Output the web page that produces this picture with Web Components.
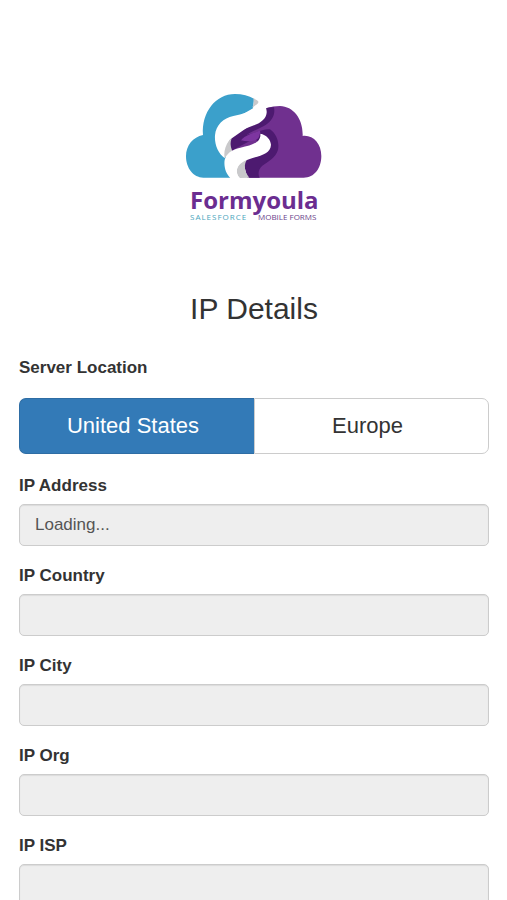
<!DOCTYPE html>
<html lang="en">
<head>
<meta charset="utf-8">
<meta name="viewport" content="width=device-width, initial-scale=1">
<title>IP Details</title>
<style>
  body {
    margin: 0;
    background: #fff;
    color: #333;
    font-family: "Liberation Sans", Arial, sans-serif;
    font-size: 17px;
    line-height: 24px;
  }
</style>
</head>
<body>
<ip-page>
  <brand-logo slot="logo"></brand-logo>
  <span slot="title">IP Details</span>
  <server-switch>
    <span slot="label">Server Location</span>
    <span slot="first">United States</span>
    <span slot="second">Europe</span>
  </server-switch>
  <info-field label="IP Address" value="Loading..."></info-field>
  <info-field label="IP Country"></info-field>
  <info-field label="IP City"></info-field>
  <info-field label="IP Org"></info-field>
  <info-field label="IP ISP"></info-field>
</ip-page>

<template id="page-template">
  <style>
    :host { display: block; padding: 85px 18px 24px 19px; }
    header { display: flex; flex-direction: column; align-items: center; gap: 61px; }
    h1 { margin: 0; font-size: 30px; line-height: 36px; font-weight: 500; }
    main { display: flex; flex-direction: column; gap: 18px; margin-top: 29px; }
  </style>
  <header>
    <slot name="logo"></slot>
    <h1><slot name="title"></slot></h1>
  </header>
  <main><slot></slot></main>
</template>

<template id="logo-template">
  <style>
    :host { display: block; width: 150px; }
    svg { display: block; width: 100%; }
    text { font-family: "Open Sans", "Noto Sans", sans-serif; }
    .name { font-size: 24px; font-weight: 700; fill: #6b2d90; }
    .tag { font-size: 8px; }
    .sales { fill: #4aa5bd; letter-spacing: 1px; }
    .forms { fill: #6b3f8c; }
  </style>
  <svg viewBox="-1 0 150 145" role="img" aria-label="Formyoula Salesforce Mobile Forms">
    <g transform="scale(.33333)">
      <path fill="#3ba0cb" d="M70 278C40 278 18 249 18 214C18 181 39 156 69 150C64 82 107 27 165 27C187 27 207 33 222 41L219 70L150 110L120 150L125 200L145 225L151 278Z"/>
      <path fill="#c9c9cb" d="M219 39C227 43 234 47 238 53L216 68C222 58 223 48 219 39Z"/>
      <path fill="#70308f" d="M260 69C274 65 286 63 300 63C341 64 370 103 368 153C399 149 424 176 424 213C424 250 403 278 371 278H205L195 230L150 198L155 163L258 103Z"/>
      <path fill="#4d1a70" d="M258 70C267 67 275 66 282 67C286 88 278 105 258 119C235 134 212 138 194 155L153 200L148 165L220 115Z"/>
      <path fill="#4d1a70" d="M153 198L152 172C172 158 200 148 225 143C244 136 258 131 270 133C288 145 299 170 294 194C288 218 263 230 247 242C235 253 233 267 239 278H202L190 232L240 180L225 160Z"/>
      <path fill="#7d35a0" d="M183 166C199 148 221 145 236 138C243 137 241 144 239 148C238 158 234 163 226 166C212 170 197 170 183 166Z"/>
      <path fill="#c9c9cb" d="M132 220C127 192 138 170 156 158C149 173 152 187 158 199Z"/>
      <path fill="#c9c9cb" d="M180 279C159 259 175 234 204 219C189 239 193 260 208 278Z"/>
      <path fill="#fff" d="M237 48C253 57 261 68 260 83C258 101 243 113 222 121C190 132 163 145 148 165C134 185 131 204 134 219C114 205 103 178 105 151C108 119 130 100 160 93C194 85 226 78 237 48Z"/>
      <path fill="#fff" d="M241 146C259 149 272 164 273 179C272 204 246 211 218 219C194 226 174 236 171 252C169 263 173 272 179 280H152C137 266 131 244 134 225C139 204 156 194 181 188C217 180 244 173 241 146Z"/>
    </g>
    <text class="name" x="10" y="124">Formyoula</text>
    <text class="tag sales" x="10" y="135">SALESFORCE</text>
    <text class="tag forms" x="78" y="135">MOBILE FORMS</text>
  </svg>
</template>

<template id="switch-template">
  <style>
    :host { display: block; padding-bottom: 2px; }
    .label { font-weight: 700; }
    .group { display: grid; grid-template-columns: 1fr 1fr; margin-top: 18px; }
    button {
      margin: 0; padding: 12px 20px 12px 12px;
      border: 1px solid #ccc; background: #fff; color: #333;
      font-family: inherit; font-size: 22px; line-height: 30px;
      cursor: pointer;
    }
    button:first-child { border-radius: 7px 0 0 7px; border-right-width: 0; }
    button:last-child { border-radius: 0 7px 7px 0; }
    button[aria-pressed="true"] { background: #337ab7; border-color: #2e6da4; color: #fff; }
  </style>
  <div class="label" id="label"><slot name="label"></slot></div>
  <div class="group" role="group" aria-labelledby="label">
    <button type="button" aria-pressed="true"><slot name="first"></slot></button>
    <button type="button" aria-pressed="false"><slot name="second"></slot></button>
  </div>
</template>

<template id="field-template">
  <style>
    :host { display: flex; flex-direction: column; gap: 6px; }
    label { font-weight: 700; }
    input {
      box-sizing: border-box; width: 100%; height: 42px; margin: 0; padding: 6px 15px;
      border: 1px solid #ccc; border-radius: 5px;
      background: #eee; color: #555;
      box-shadow: inset 0 1px 1px rgba(0, 0, 0, .08);
      font-family: inherit; font-size: 17px;
    }
  </style>
  <label for="value"></label>
  <input id="value" type="text" readonly>
</template>

<script>
  class TemplateElement extends HTMLElement {
    constructor() {
      super();
      const template = document.getElementById(this.constructor.template);
      this.attachShadow({ mode: "open" }).append(template.content.cloneNode(true));
    }
  }

  class IpPage extends TemplateElement {
    static template = "page-template";
  }

  class BrandLogo extends TemplateElement {
    static template = "logo-template";
  }

  class ServerSwitch extends TemplateElement {
    static template = "switch-template";
    connectedCallback() {
      const buttons = this.shadowRoot.querySelectorAll("button");
      buttons.forEach(button => {
        button.onclick = () => buttons.forEach(b => b.setAttribute("aria-pressed", String(b === button)));
      });
    }
  }

  class InfoField extends TemplateElement {
    static template = "field-template";
    connectedCallback() {
      this.shadowRoot.querySelector("label").textContent = this.getAttribute("label");
      this.shadowRoot.querySelector("input").value = this.getAttribute("value") || "";
    }
  }

  customElements.define("ip-page", IpPage);
  customElements.define("brand-logo", BrandLogo);
  customElements.define("server-switch", ServerSwitch);
  customElements.define("info-field", InfoField);
</script>
</body>
</html>
